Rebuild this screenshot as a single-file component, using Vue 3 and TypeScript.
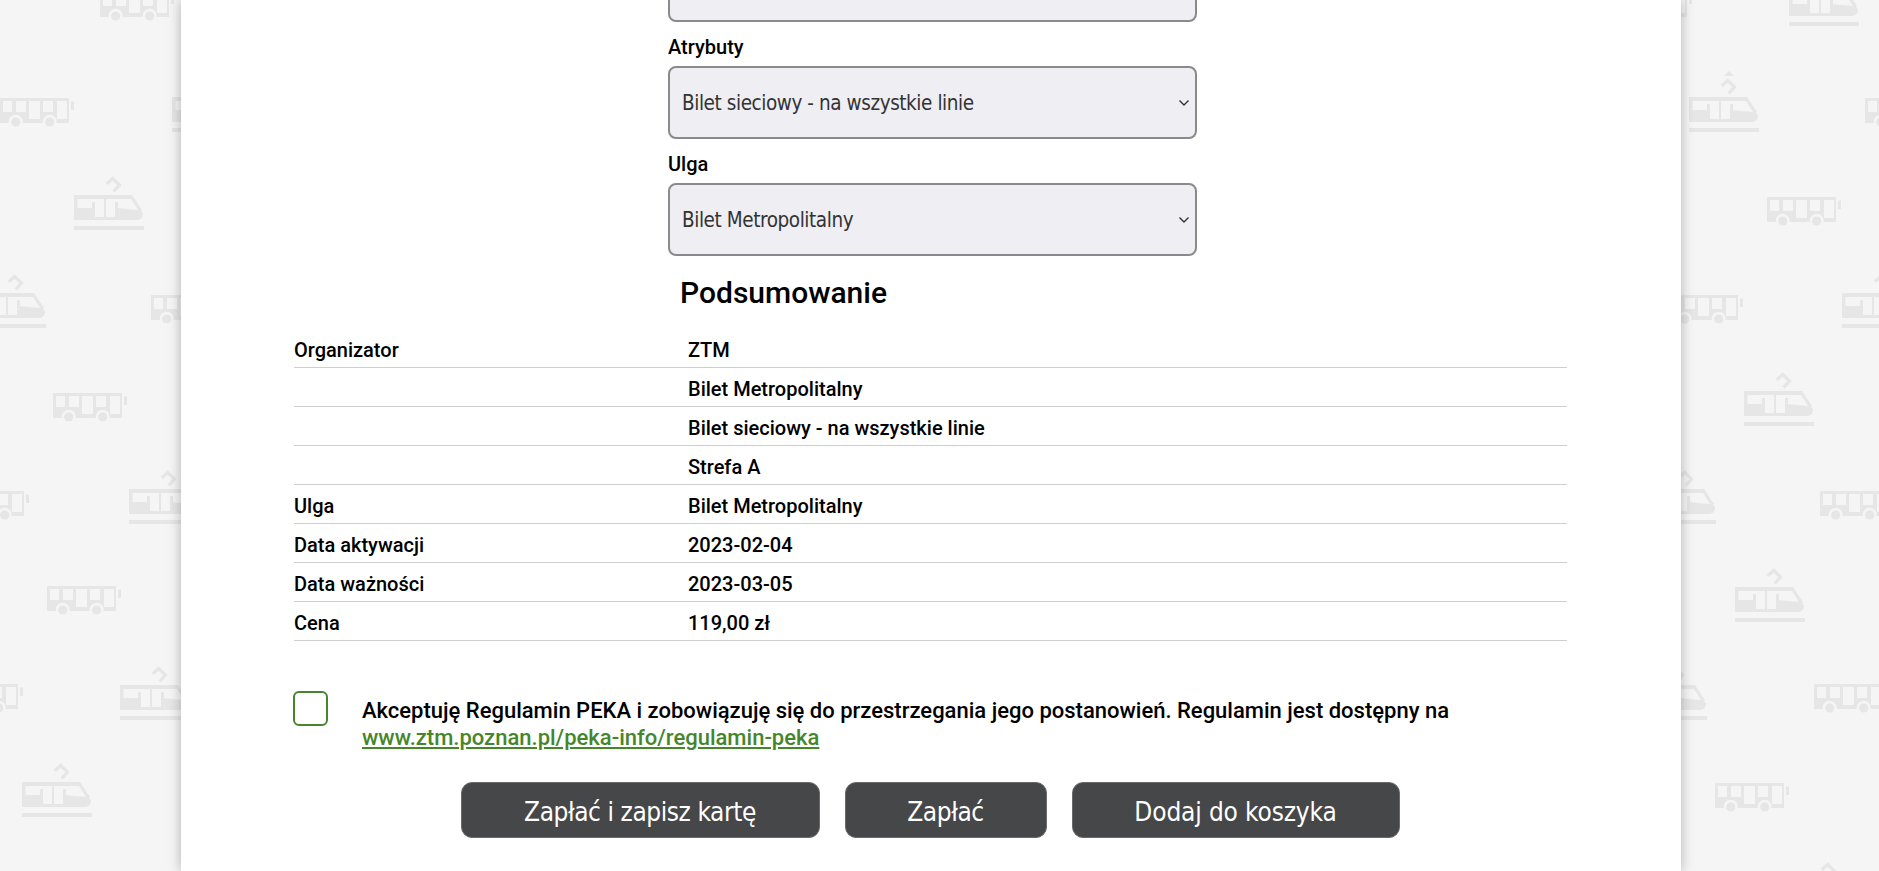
<script setup lang="ts">
type Pos = [number, number]
const buses: Pos[] = [[100,-8],[0,98],[151,295],[53,393],[-45,491],[47,586],[-51,684],[1618,-8],[1865,98],[1767,197],[1669,295],[1820,491],[1814,684],[1715,783]]
const trams: Pos[] = [[172,97],[74,195],[-24,293],[129,489],[120,685],[22,782],[1789,-9],[1689,97],[1842,293],[1744,391],[1646,489],[1735,587],[1637,685],[1789,881]]
const rows: [string, string][] = [
  ['Organizator', 'ZTM'],
  ['', 'Bilet Metropolitalny'],
  ['', 'Bilet sieciowy - na wszystkie linie'],
  ['', 'Strefa A'],
  ['Ulga', 'Bilet Metropolitalny'],
  ['Data aktywacji', '2023-02-04'],
  ['Data ważności', '2023-03-05'],
  ['Cena', '119,00 zł'],
]
const buttons = ['Zapłać i zapisz kartę', 'Zapłać', 'Dodaj do koszyka']
</script>

<template>
  <div class="page">
    <svg class="pattern" width="1879" height="871" viewBox="0 0 1879 871" aria-hidden="true">
      <defs>
        <g id="bus">
          <path fill="#e6e6e6" d="M0 0H69V25H0Z" />
          <path fill="#e6e6e6" d="M71 3.5H74V12H71Z" />
          <path fill="#f5f5f5" d="M3 3H12V14H3ZM16 3H26V14H16ZM29 3H40V21H29ZM43 3H53V14H43ZM57 3H67V21H57Z" />
          <circle cx="15.7" cy="23.8" r="7" fill="#f5f5f5" />
          <circle cx="49.7" cy="23.8" r="7" fill="#f5f5f5" />
          <circle cx="15.7" cy="24" r="4.6" fill="#e6e6e6" />
          <circle cx="49.7" cy="24" r="4.6" fill="#e6e6e6" />
        </g>
        <g id="tram">
          <path fill="#e6e6e6" d="M0 0H58L68 15L67 16.5L69 18Q69 25 63 25H0Z" />
          <path fill="#f5f5f5" d="M3.5 4H30V22H21V7H18V13H3.5ZM32 4H57L64 15L47 13.5L44 13V7H41V22H32Z" />
          <path fill="none" stroke="#e6e6e6" stroke-width="3.2" d="M32.7 -11.2L38.7 -16.5L45.5 -10L39.7 -3.5" />
          <path fill="#e6e6e6" d="M0 31H70V35H0Z" />
        </g>
      </defs>
      <use v-for="(p, i) in buses" :key="'b' + i" href="#bus" :x="p[0]" :y="p[1]" />
      <use v-for="(p, i) in trams" :key="'t' + i" href="#tram" :x="p[0]" :y="p[1]" />
      <path fill="#e6e6e6" d="M1724 76L1729 71L1734 76Z" />
    </svg>

    <main class="panel">
      <form class="fields" @submit.prevent>
        <select class="field field-first" aria-label="Strefa"><option>Strefa A</option></select>
        <label class="field-label" for="attr">Atrybuty</label>
        <select id="attr" class="field"><option>Bilet sieciowy - na wszystkie linie</option></select>
        <label class="field-label" for="ulga">Ulga</label>
        <select id="ulga" class="field"><option>Bilet Metropolitalny</option></select>
        <h2 class="heading">Podsumowanie</h2>
      </form>

      <table class="summary">
        <tbody>
          <tr v-for="(r, i) in rows" :key="i">
            <td class="key">{{ r[0] }}</td>
            <td>{{ r[1] }}</td>
          </tr>
        </tbody>
      </table>

      <div class="accept">
        <input class="check" type="checkbox" aria-label="Akceptuję regulamin" />
        <p class="accept-text">
          Akceptuję Regulamin PEKA i zobowiązuję się do przestrzegania jego postanowień. Regulamin jest dostępny na
          <a href="#">www.ztm.poznan.pl/peka-info/regulamin-peka</a>
        </p>
      </div>

      <div class="actions">
        <button v-for="b in buttons" :key="b" class="btn" type="button">{{ b }}</button>
      </div>
    </main>
  </div>
</template>

<style>
html, body { margin: 0; overflow: hidden; background: #f5f5f5; }
</style>

<style scoped>
.page {
  position: relative;
  width: 1879px;
  height: 871px;
  overflow: hidden;
  background: #f5f5f5;
  font-family: Roboto, "Liberation Sans", sans-serif;
  color: #000;
}
.pattern { position: absolute; left: 0; top: 0; filter: blur(0.45px); }
.panel {
  position: relative;
  box-sizing: border-box;
  width: 1500px;
  height: 871px;
  margin-left: 181px;
  padding: 0 113px;
  background: #fff;
  box-shadow: 0 0 12px rgba(0, 0, 0, 0.28);
  overflow: hidden;
}
.fields {
  display: flex;
  flex-direction: column;
  width: 529px;
  margin-left: 374px;
}
.field {
  box-sizing: border-box;
  width: 529px;
  height: 73px;
  padding: 1px 24px 0 12px;
  border: 2px solid #8a8a8a;
  border-radius: 8px;
  appearance: none;
  background-color: #eeeef3;
  background-image: url("data:image/svg+xml,%3Csvg xmlns='http://www.w3.org/2000/svg' width='12' height='8' viewBox='0 0 12 8'%3E%3Cpath d='M1.5 1.5L6 6L10.5 1.5' fill='none' stroke='%23333' stroke-width='1.4'/%3E%3C/svg%3E");
  background-repeat: no-repeat;
  background-position: right 5px center;
  color: #333;
  font-family: "DejaVu Sans Condensed", "DejaVu Sans", sans-serif;
  font-stretch: condensed;
  font-size: 20.5px;
  letter-spacing: -0.43px;
}
.field-first { margin-top: -51px; }
.field-label {
  display: block;
  height: 44px;
  box-sizing: border-box;
  padding-top: 14px;
  line-height: 23px;
  font-size: 20px;
  font-weight: 500;
}
.heading {
  margin: 19px 0 0 12px;
  font-size: 30px;
  line-height: 36px;
  font-weight: 500;
}
.summary {
  width: 1273px;
  margin-top: 17px;
  border-collapse: collapse;
  table-layout: fixed;
  font-size: 20px;
  font-weight: 500;
}
.summary td {
  height: 39px;
  padding: 6px 0 0;
  border-bottom: 1px solid #cfcfcf;
  line-height: 23px;
  box-sizing: border-box;
}
.summary td.key { width: 394px; }
.accept {
  display: flex;
  align-items: flex-start;
  margin-top: 50px;
}
.check {
  appearance: none;
  box-sizing: border-box;
  flex: none;
  width: 35px;
  height: 35px;
  margin: 0 34px 0 -1px;
  border: 2px solid #47852a;
  border-radius: 6px;
  background: #fff;
}
.accept-text {
  margin: 6px 0 0;
  width: 1180px;
  font-size: 22px;
  line-height: 27px;
  font-weight: 500;
}
.accept-text a { display: block; color: #46862a; text-decoration: underline; }
.actions {
  display: flex;
  justify-content: center;
  gap: 25px;
  margin: 31px 0 0 -2px;
}
.btn {
  height: 56px;
  padding: 4px 0 0;
  border: 1px solid #6a6a6a;
  border-radius: 11px;
  background: #464749;
  color: #fff;
  font-family: "DejaVu Sans Condensed", "DejaVu Sans", sans-serif;
  font-stretch: condensed;
  font-size: 26px;
  letter-spacing: -0.43px;
}
.btn:nth-child(1) { width: 359px; }
.btn:nth-child(2) { width: 202px; }
.btn:nth-child(3) { width: 328px; letter-spacing: -0.15px; }
</style>
